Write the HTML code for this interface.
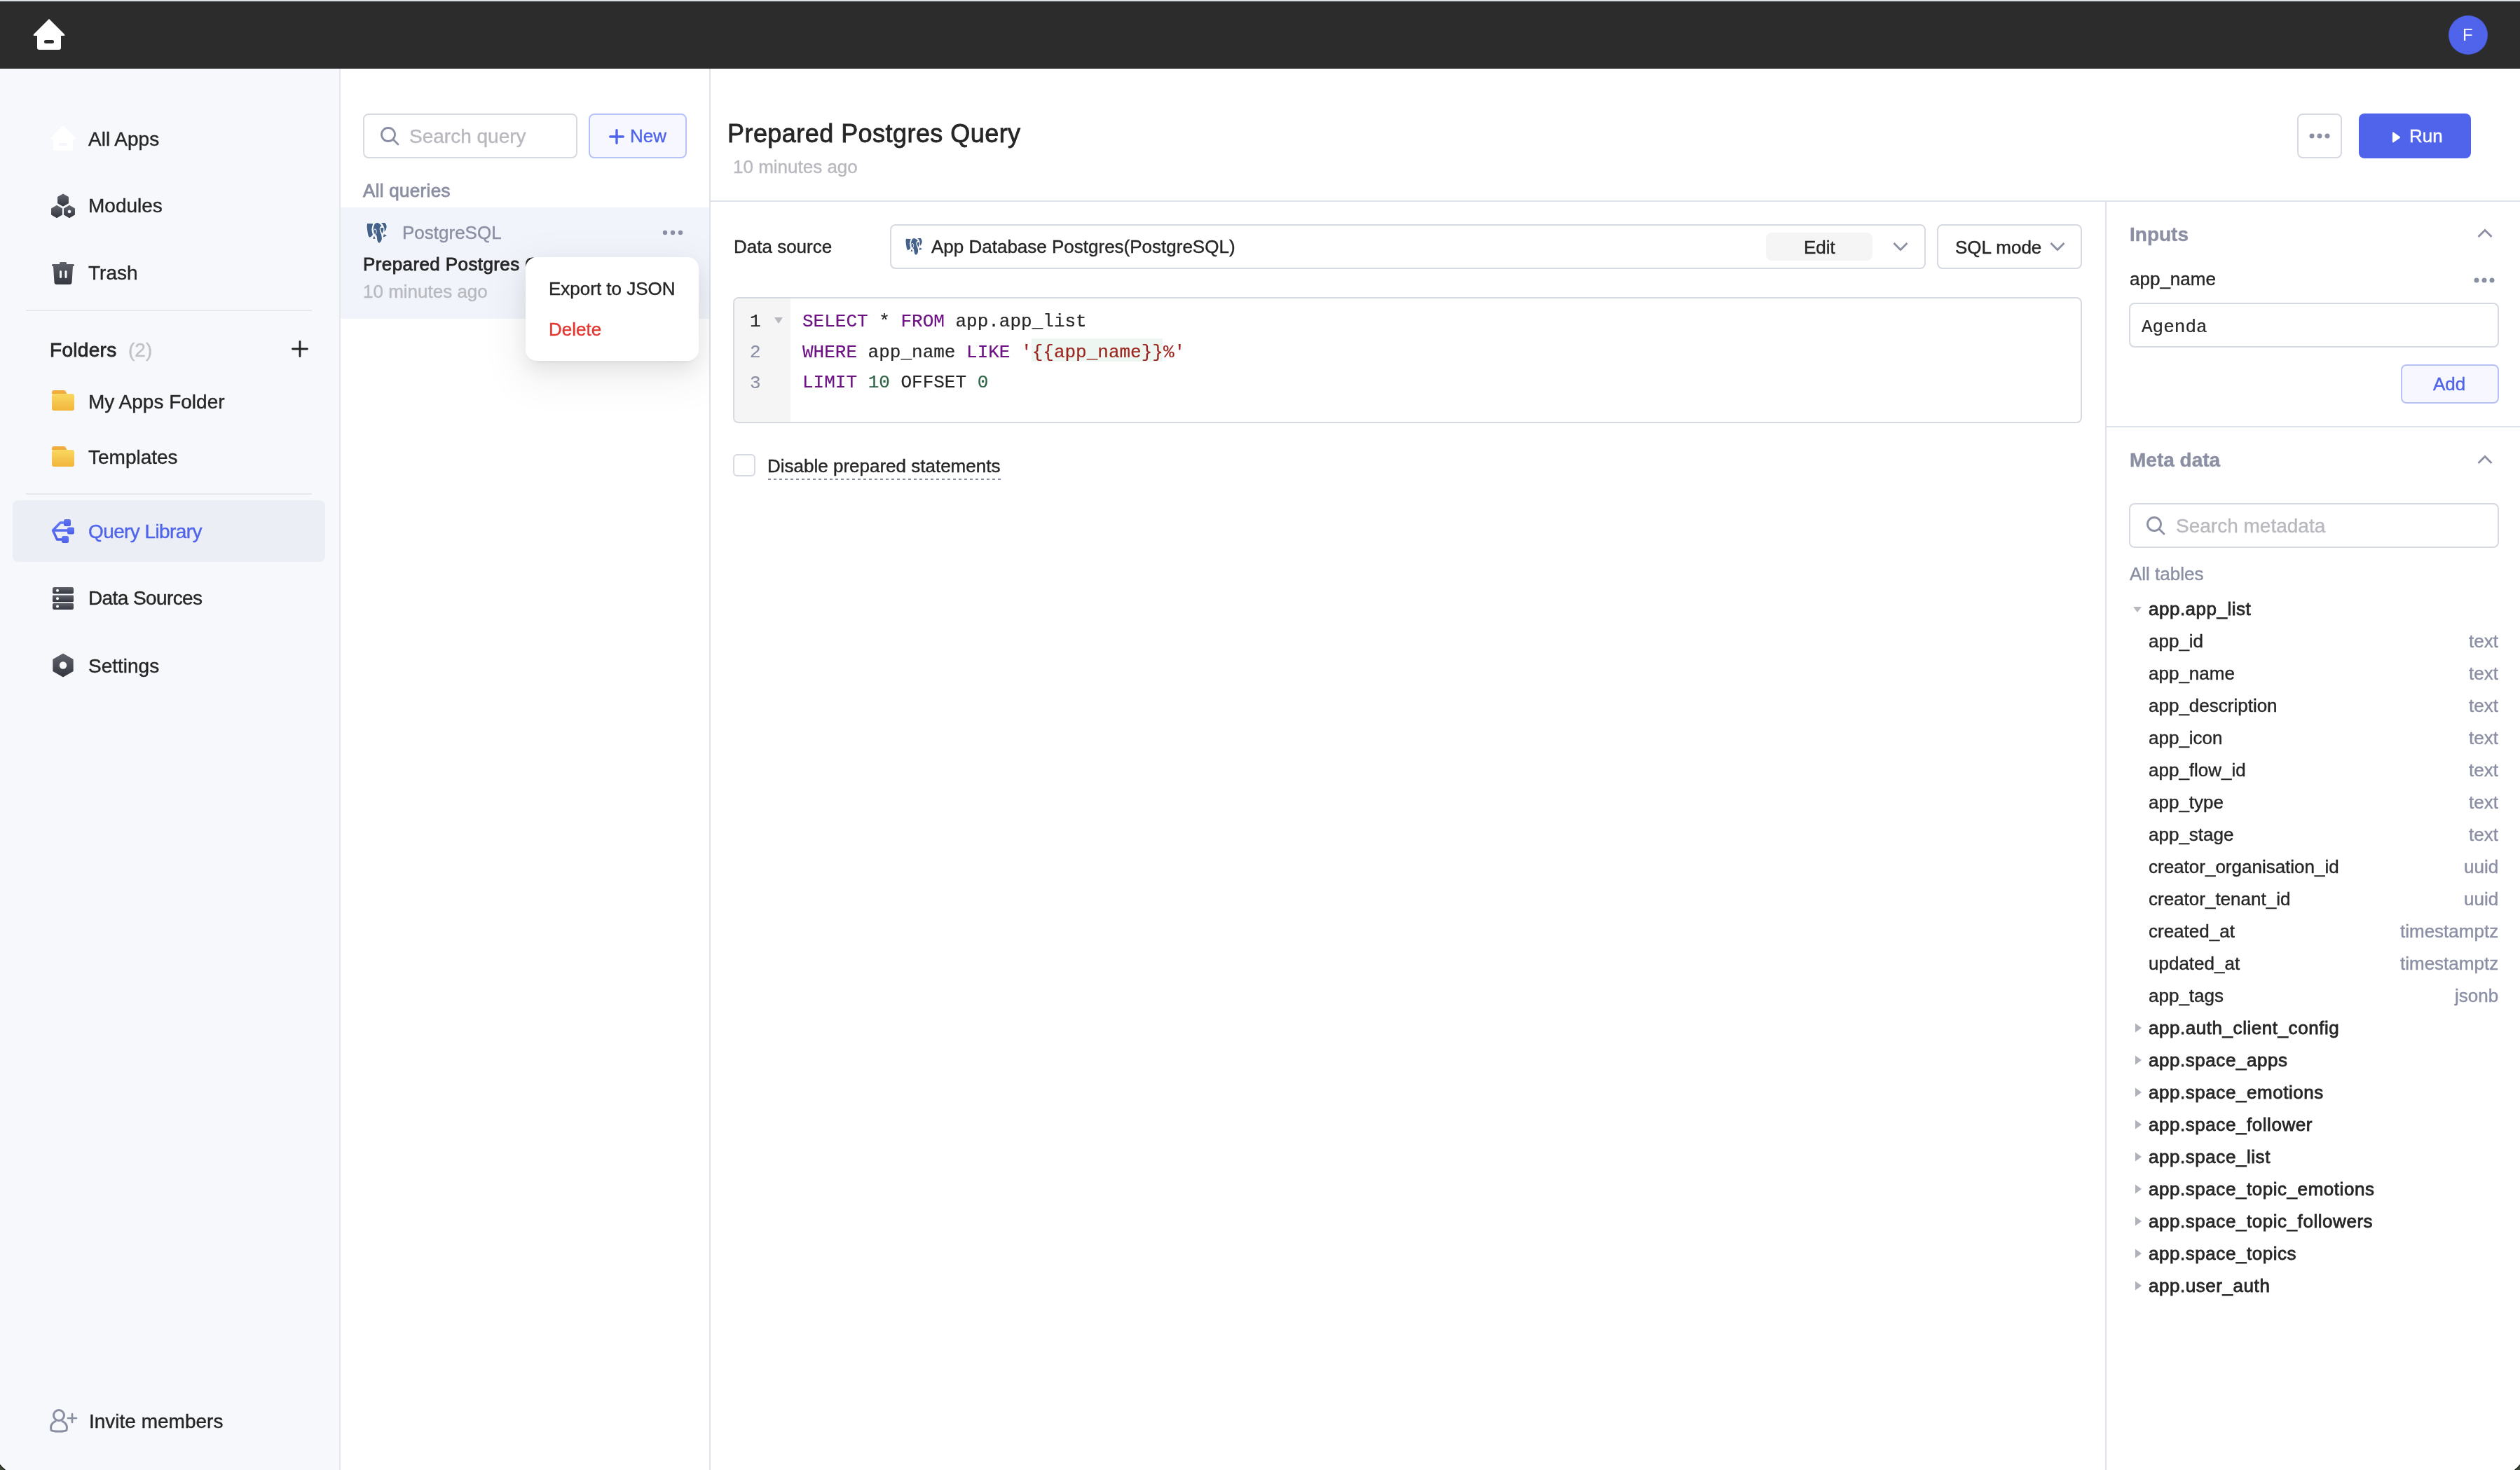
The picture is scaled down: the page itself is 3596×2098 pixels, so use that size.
<!DOCTYPE html>
<html><head><meta charset="utf-8"><style>
html,body{margin:0;padding:0;width:3596px;height:2098px;overflow:hidden;background:#fff}
body>div,body>svg{position:absolute;box-sizing:content-box}
.t{white-space:pre;line-height:1;will-change:transform;-webkit-text-stroke:0.4px currentColor}
.m{-webkit-text-stroke:0.2px currentColor}
.s{font-family:"Liberation Sans",sans-serif}
.m{font-family:"Liberation Mono",monospace}
</style></head><body>
<div style="left:0px;top:0px;width:3596px;height:2px;background:#dcdfe3"></div>
<div style="left:0px;top:2px;width:3596px;height:96px;background:#2c2c2c"></div>
<div style="left:0px;top:2px;width:3596px;height:1px;background:#1f1f1f"></div>
<svg style="left:47px;top:26px" width="46" height="46" viewBox="0 0 46 46"><path d="M23 1 L45 23 Q46 25 44 25 L40 25 L40 42 Q40 45 37 45 L9 45 Q6 45 6 42 L6 25 L2 25 Q0 25 1 23 Z" fill="#fff"/><rect x="16" y="31" width="14" height="5" rx="2.5" fill="#2c2c2c"/></svg>
<div style="left:3494px;top:22px;width:56px;height:56px;border-radius:50%;background:#4f64ea;box-shadow:inset 0 0 0 1px rgba(0,0,0,0.06)"></div>
<div class="t s" style="top:38px;font-size:24px;color:#fff;left:3514px;-webkit-text-stroke:0;">F</div>
<div style="left:0px;top:98px;width:484px;height:2000px;background:#f7f8fc"></div>
<div style="left:484px;top:98px;width:2px;height:2000px;background:#e6e7ea"></div>
<svg style="left:71px;top:178px" width="38" height="38" viewBox="0 0 38 38"><path d="M19 1 L37 19 Q38 21 36 21 L33 21 L33 35 Q33 37 31 37 L7 37 Q5 37 5 35 L5 21 L2 21 Q0 21 1 19 Z" fill="#ffffff"/><rect x="13" y="26" width="12" height="4" rx="2" fill="#f5f6fa"/></svg>
<div class="t s" style="top:185px;font-size:28px;color:#262626;left:126px;">All Apps</div>
<svg style="left:72px;top:276px" width="36" height="36" viewBox="0 0 36 36"><defs><linearGradient id="gd" x1="0" y1="0" x2="0" y2="1"><stop offset="0" stop-color="#60636b"/><stop offset="1" stop-color="#34373f"/></linearGradient></defs><path d="M18.00 1.30 L25.19 5.45 L25.19 13.75 L18.00 17.90 L10.81 13.75 L10.81 5.45 Z" fill="url(#gd)" stroke="url(#gd)" stroke-width="1.5" stroke-linejoin="round"/><path d="M9.00 17.70 L16.19 21.85 L16.19 30.15 L9.00 34.30 L1.81 30.15 L1.81 21.85 Z" fill="url(#gd)" stroke="url(#gd)" stroke-width="1.5" stroke-linejoin="round"/><path d="M27.00 17.70 L34.19 21.85 L34.19 30.15 L27.00 34.30 L19.81 30.15 L19.81 21.85 Z M27.00 22.60 L29.94 24.30 L29.94 27.70 L27.00 29.40 L24.06 27.70 L24.06 24.30 Z" fill="url(#gd)" fill-rule="evenodd" stroke="url(#gd)" stroke-width="1.5" stroke-linejoin="round"/></svg>
<div class="t s" style="top:280px;font-size:28px;color:#262626;left:126px;">Modules</div>
<svg style="left:73px;top:373px" width="34" height="34" viewBox="0 0 34 34"><defs><linearGradient id="gd" x1="0" y1="0" x2="0" y2="1"><stop offset="0" stop-color="#60636b"/><stop offset="1" stop-color="#34373f"/></linearGradient></defs><path d="M12 2 Q12 1 14 1 L20 1 Q22 1 22 2 L22 4 L32 4 Q33 4 33 5.5 Q33 7 32 7 L31 7 L29.5 30 Q29.3 33 26 33 L8 33 Q4.7 33 4.5 30 L3 7 L2 7 Q1 7 1 5.5 Q1 4 2 4 L12 4 Z" fill="url(#gd)"/><rect x="12" y="13" width="3" height="11" rx="1.5" fill="#f7f8fa"/><rect x="19.5" y="13" width="3" height="11" rx="1.5" fill="#f7f8fa"/></svg>
<div class="t s" style="top:376px;font-size:28px;color:#262626;left:126px;">Trash</div>
<div style="left:37px;top:442px;width:408px;height:2px;background:#e8e8ea"></div>
<div class="t s" style="top:486px;font-size:28px;color:#262626;left:71px;-webkit-text-stroke:0.8px currentColor;letter-spacing:0.3px;">Folders</div>
<div class="t s" style="top:486px;font-size:28px;color:#c0c2c8;left:183px;">(2)</div>
<svg style="left:414px;top:484px" width="28" height="28" viewBox="0 0 28 28"><path d="M14 3.5 V24.5 M3.5 14 H24.5" stroke="#222" stroke-width="2.8" stroke-linecap="round"/></svg>
<svg style="left:74px;top:557px" width="32" height="29" viewBox="0 0 32 29"><defs><linearGradient id="gf" x1="0" y1="0" x2="0" y2="1"><stop offset="0" stop-color="#f9d862"/><stop offset="1" stop-color="#f2b53c"/></linearGradient></defs><path d="M0 3 Q0 0 3 0 L17 0 Q19 0 20 2 L21.5 5 L0 5 Z" fill="#f0ad3a"/><rect x="0" y="5" width="32" height="24" rx="3" fill="url(#gf)"/></svg>
<div class="t s" style="top:560px;font-size:28px;color:#262626;left:126px;">My Apps Folder</div>
<svg style="left:74px;top:637px" width="32" height="29" viewBox="0 0 32 29"><defs><linearGradient id="gf2" x1="0" y1="0" x2="0" y2="1"><stop offset="0" stop-color="#f9d862"/><stop offset="1" stop-color="#f2b53c"/></linearGradient></defs><path d="M0 3 Q0 0 3 0 L17 0 Q19 0 20 2 L21.5 5 L0 5 Z" fill="#f0ad3a"/><rect x="0" y="5" width="32" height="24" rx="3" fill="url(#gf2)"/></svg>
<div class="t s" style="top:639px;font-size:28px;color:#262626;left:126px;">Templates</div>
<div style="left:37px;top:704px;width:408px;height:2px;background:#e8e8ea"></div>
<div style="left:18px;top:714px;width:446px;height:88px;background:#ebeef5;border-radius:8px"></div>
<svg style="left:73px;top:740px" width="34" height="36" viewBox="0 0 34 36"><defs><linearGradient id="gq" x1="0" y1="0" x2="0" y2="1"><stop offset="0" stop-color="#6177f3"/><stop offset="1" stop-color="#4a5ee8"/></linearGradient></defs><path d="M20 6 L13 6 L2.5 17 L8.5 30 L18 30 M3 17 L24 17" stroke="url(#gq)" stroke-width="3.4" fill="none" stroke-linejoin="round"/><rect x="18" y="1" width="10" height="10" rx="2.5" fill="url(#gq)"/><rect x="23" y="12.5" width="10" height="10" rx="2.5" fill="url(#gq)"/><rect x="15" y="25" width="10" height="10" rx="2.5" fill="url(#gq)"/></svg>
<div class="t s" style="top:745px;font-size:28px;color:#4f64ea;left:126px;letter-spacing:-0.6px;">Query Library</div>
<svg style="left:75px;top:838px" width="30" height="32" viewBox="0 0 30 32"><defs><linearGradient id="gd" x1="0" y1="0" x2="0" y2="1"><stop offset="0" stop-color="#60636b"/><stop offset="1" stop-color="#34373f"/></linearGradient></defs><rect x="0" y="0" width="30" height="9.5" rx="2.5" fill="url(#gd)"/><rect x="0" y="11.5" width="30" height="9.5" rx="1" fill="url(#gd)"/><rect x="0" y="22.5" width="30" height="9.5" rx="2.5" fill="url(#gd)"/><circle cx="7" cy="4.8" r="2" fill="#fff"/><circle cx="7" cy="16.2" r="2" fill="#fff"/><circle cx="7" cy="27.4" r="2" fill="#fff"/></svg>
<div class="t s" style="top:840px;font-size:28px;color:#262626;left:126px;letter-spacing:-0.6px;">Data Sources</div>
<svg style="left:74px;top:932px" width="32" height="35" viewBox="0 0 32 35"><defs><linearGradient id="gd" x1="0" y1="0" x2="0" y2="1"><stop offset="0" stop-color="#60636b"/><stop offset="1" stop-color="#34373f"/></linearGradient></defs><path d="M16.00 1.50 L29.86 9.50 L29.86 25.50 L16.00 33.50 L2.14 25.50 L2.14 9.50 Z M16.00 17.40 L16.09 17.45 L16.09 17.55 L16.00 17.60 L15.91 17.55 L15.91 17.45 Z" fill="url(#gd)" stroke="url(#gd)" stroke-width="1.6" stroke-linejoin="round"/><circle cx="16" cy="17.5" r="5.2" fill="#f7f8fa"/></svg>
<div class="t s" style="top:937px;font-size:28px;color:#262626;left:126px;">Settings</div>
<svg style="left:70px;top:2010px" width="42" height="36" viewBox="0 0 42 36"><circle cx="14" cy="10" r="7.5" stroke="#8b8fa3" stroke-width="3" fill="none"/><path d="M3 31 Q1 22 9 18.5 M19 18.5 Q27 22 25 31 Q24 33 14 33 Q4 33 3 31" stroke="#8b8fa3" stroke-width="3" fill="none" stroke-linecap="round"/><path d="M33 8 V20 M27 14 H39" stroke="#8b8fa3" stroke-width="2.6" stroke-linecap="round"/></svg>
<div class="t s" style="top:2015px;font-size:28px;color:#262626;left:127px;">Invite members</div>
<div style="left:486px;top:98px;width:526px;height:2000px;background:#fff"></div>
<div style="left:1012px;top:98px;width:2px;height:2000px;background:#e1e3eb"></div>
<div style="left:518px;top:162px;width:302px;height:60px;border:2px solid #d7d9e0;border-radius:8px;background:#fff"></div>
<svg style="left:542px;top:180px" width="28" height="28" viewBox="0 0 28 28"><circle cx="12" cy="12" r="9.5" stroke="#8b8fa3" stroke-width="2.8" fill="none"/><path d="M19 19 L26 26" stroke="#8b8fa3" stroke-width="2.8" stroke-linecap="round"/></svg>
<div class="t s" style="top:181px;font-size:28px;color:#b8b9bf;left:584px;">Search query</div>
<div style="left:840px;top:162px;width:136px;height:60px;border:2px solid #b7c2f8;border-radius:8px;background:#f7f8ff"></div>
<svg style="left:868px;top:183px" width="24" height="24" viewBox="0 0 24 24"><path d="M12 2.7 V21.3 M2.7 12 H21.3" stroke="#4f64ea" stroke-width="3.4" stroke-linecap="round"/></svg>
<div class="t s" style="top:181px;font-size:26px;color:#4f64ea;left:899px;">New</div>
<div class="t s" style="top:259px;font-size:26px;color:#8b8fa3;left:518px;-webkit-text-stroke:0.8px currentColor;letter-spacing:0.3px;">All queries</div>
<div style="left:486px;top:296px;width:526px;height:159px;background:#f1f4fa"></div>
<svg style="left:523px;top:318px" width="29" height="29" viewBox="0 0 29 29"><g fill="#44618a" stroke="#fff" stroke-width="1.6" stroke-linejoin="round" style="paint-order:stroke"><path d="M1.2 0.95 L9.3 1.3 Q8 5 7.4 9.1 Q7.6 14 9 16.9 Q7 20 4.2 20.7 Q2.6 19.5 2.2 17 Q1.2 12 0.6 6 Q0.6 2.5 1.2 0.95 Z"/><path d="M9 22.7 L10.9 18.6 L12.7 22.7 Z"/><path d="M20.9 0.1 L26.4 0.1 Q28.6 2.5 28.7 6 Q28.3 10 25.5 12.9 Q26 8.5 24.3 4.7 Q23.2 2.2 20.9 0.1 Z"/><path d="M23.6 20.7 L29 18.5 L24.8 15.9 Z"/><path d="M11.5 2 Q13 0.3 15 0.1 Q18 0.2 21.6 4.3 L19.2 6.2 Q18.2 8.5 19.3 12.5 Q21.7 16.5 21.9 22 Q21.8 26.5 18.2 28.7 Q15.8 28.2 15.2 24 Q14.9 20 14.2 18 Q11.2 17 9.8 14.5 Q9.2 11 9.6 8.5 Q10.2 4.5 11.5 2 Z"/><path d="M12 9.3 Q13.9 10 13.8 13 Q13.6 15.5 12.4 16.4 Q10.9 15.2 10.6 12.6 Q10.5 9.9 12 9.3 Z"/><path d="M19.6 7.6 Q22 6.6 24.5 7.4 Q24.6 11 22.5 15.4 Q20.3 12 19.6 7.6 Z"/></g></svg>
<div class="t s" style="top:319px;font-size:26px;color:#8b8fa3;left:574px;">PostgreSQL</div>
<svg style="left:943px;top:326px" width="36" height="12" viewBox="0 0 36 12"><circle cx="6" cy="6" r="3.2" fill="#8b8fa3"/><circle cx="17" cy="6" r="3.2" fill="#8b8fa3"/><circle cx="28" cy="6" r="3.2" fill="#8b8fa3"/></svg>
<div class="t s" style="top:364px;font-size:26px;color:#262626;left:518px;-webkit-text-stroke:0.8px currentColor;letter-spacing:0.4px;">Prepared Postgres Query</div>
<div class="t s" style="top:403px;font-size:26px;color:#b8b9bf;left:518px;">10 minutes ago</div>
<div style="left:750px;top:367px;width:247px;height:148px;background:#fff;border-radius:16px;box-shadow:0 12px 32px rgba(0,0,0,0.08),0 6px 12px -8px rgba(0,0,0,0.12),0 18px 56px 16px rgba(0,0,0,0.05)"></div>
<div class="t s" style="top:399px;font-size:26px;color:#262626;left:783px;">Export to JSON</div>
<div class="t s" style="top:457px;font-size:26px;color:#e2372f;left:783px;">Delete</div>
<div style="left:1014px;top:98px;width:2582px;height:2000px;background:#fff"></div>
<div class="t s" style="top:173px;font-size:36px;color:#262626;left:1038px;-webkit-text-stroke:0.8px currentColor;letter-spacing:0.45px;">Prepared Postgres Query</div>
<div class="t s" style="top:225px;font-size:26px;color:#b8b9bf;left:1046px;">10 minutes ago</div>
<div style="left:3278px;top:162px;width:60px;height:60px;border:2px solid #d7d9e0;border-radius:8px;background:#fff"></div>
<svg style="left:3292px;top:188px" width="36" height="12" viewBox="0 0 36 12"><circle cx="7" cy="6" r="3.5" fill="#8b8fa3"/><circle cx="18" cy="6" r="3.5" fill="#8b8fa3"/><circle cx="29" cy="6" r="3.5" fill="#8b8fa3"/></svg>
<div style="left:3366px;top:162px;width:160px;height:64px;background:#4f64ea;border-radius:8px"></div>
<svg style="left:3411px;top:187px" width="16" height="18" viewBox="0 0 16 18"><path d="M3 2.5 Q3 1 4.5 1.8 L13.5 8 Q14.5 9 13.5 10 L4.5 16.2 Q3 17 3 15.5 Z" fill="#fff"/></svg>
<div class="t s" style="top:181px;font-size:26px;color:#fff;left:3438px;">Run</div>
<div style="left:1014px;top:286px;width:2582px;height:2px;background:#e1e3eb"></div>
<div style="left:3004px;top:288px;width:2px;height:1810px;background:#e1e3eb"></div>
<div style="left:3006px;top:288px;width:590px;height:1810px;background:#ffffff"></div>
<div class="t s" style="top:339px;font-size:26px;color:#262626;left:1047px;">Data source</div>
<div style="left:1270px;top:320px;width:1474px;height:60px;border:2px solid #d7d9e0;border-radius:8px;background:#fff"></div>
<svg style="left:1292px;top:340px" width="24" height="24" viewBox="0 0 24 24"><g transform="scale(0.8275862068965517)"><g fill="#44618a" stroke="#fff" stroke-width="1.6" stroke-linejoin="round" style="paint-order:stroke"><path d="M1.2 0.95 L9.3 1.3 Q8 5 7.4 9.1 Q7.6 14 9 16.9 Q7 20 4.2 20.7 Q2.6 19.5 2.2 17 Q1.2 12 0.6 6 Q0.6 2.5 1.2 0.95 Z"/><path d="M9 22.7 L10.9 18.6 L12.7 22.7 Z"/><path d="M20.9 0.1 L26.4 0.1 Q28.6 2.5 28.7 6 Q28.3 10 25.5 12.9 Q26 8.5 24.3 4.7 Q23.2 2.2 20.9 0.1 Z"/><path d="M23.6 20.7 L29 18.5 L24.8 15.9 Z"/><path d="M11.5 2 Q13 0.3 15 0.1 Q18 0.2 21.6 4.3 L19.2 6.2 Q18.2 8.5 19.3 12.5 Q21.7 16.5 21.9 22 Q21.8 26.5 18.2 28.7 Q15.8 28.2 15.2 24 Q14.9 20 14.2 18 Q11.2 17 9.8 14.5 Q9.2 11 9.6 8.5 Q10.2 4.5 11.5 2 Z"/><path d="M12 9.3 Q13.9 10 13.8 13 Q13.6 15.5 12.4 16.4 Q10.9 15.2 10.6 12.6 Q10.5 9.9 12 9.3 Z"/><path d="M19.6 7.6 Q22 6.6 24.5 7.4 Q24.6 11 22.5 15.4 Q20.3 12 19.6 7.6 Z"/></g></g></svg>
<div class="t s" style="top:339px;font-size:26px;color:#262626;left:1329px;">App Database Postgres(PostgreSQL)</div>
<div style="left:2520px;top:332px;width:152px;height:40px;background:#f5f5f6;border-radius:8px"></div>
<div class="t s" style="top:340px;font-size:26px;color:#262626;left:2574px;">Edit</div>
<svg style="left:2701px;top:345px" width="22" height="14" viewBox="0 0 22 14"><path d="M1.5 2 L11 11.5 L20.5 2" stroke="#8b8fa3" stroke-width="2.8" fill="none"/></svg>
<div style="left:2764px;top:320px;width:203px;height:60px;border:2px solid #d7d9e0;border-radius:8px;background:#fff"></div>
<div class="t s" style="top:340px;font-size:26px;color:#262626;left:2790px;">SQL mode</div>
<svg style="left:2925px;top:345px" width="22" height="14" viewBox="0 0 22 14"><path d="M1.5 2 L11 11.5 L20.5 2" stroke="#8b8fa3" stroke-width="2.8" fill="none"/></svg>
<div style="left:1046px;top:424px;width:1921px;height:176px;border:2px solid #d7d9e0;border-radius:8px;background:#fff;overflow:hidden"><div style="position:absolute;left:0;top:0;width:80px;height:176px;background:#f5f5f6"></div></div>
<div style="left:1472px;top:483px;width:187px;height:33px;background:#eef6f2"></div>
<div class="t m" style="top:446px;font-size:26px;color:#262626;left:1070px;">1</div>
<div class="t m" style="top:490px;font-size:26px;color:#8b8fa3;left:1070px;">2</div>
<div class="t m" style="top:534px;font-size:26px;color:#8b8fa3;left:1070px;">3</div>
<svg style="left:1104px;top:452px" width="14" height="11" viewBox="0 0 14 11"><path d="M1 1 L13 1 L7 10 Z" fill="#b8b9bf"/></svg>
<div class="t m" style="top:446px;font-size:26px;color:#262626;left:1145px;"><span style="color:#6d1283">SELECT</span> * <span style="color:#6d1283">FROM</span> app.app_list</div>
<div class="t m" style="top:490px;font-size:26px;color:#262626;left:1145px;"><span style="color:#6d1283">WHERE</span> app_name <span style="color:#6d1283">LIKE</span> <span style="color:#9c251d">'{{app_name}}%'</span></div>
<div class="t m" style="top:533px;font-size:26px;color:#262626;left:1145px;"><span style="color:#6d1283">LIMIT</span> <span style="color:#2f6447">10</span> OFFSET <span style="color:#2f6447">0</span></div>
<div style="left:1046px;top:648px;width:28px;height:28px;border:2px solid #d7d9e0;border-radius:6px;background:#fff"></div>
<div class="t s" style="top:652px;font-size:26px;color:#262626;left:1095px;">Disable prepared statements</div>
<div style="left:1096px;top:683px;width:332px;height:2px;background:repeating-linear-gradient(90deg,#8b8fa3 0 4px,transparent 4px 8px)"></div>
<div class="t s" style="top:321px;font-size:28px;color:#8b8fa3;left:3039px;font-weight:700;">Inputs</div>
<svg style="left:3535px;top:326px" width="22" height="14" viewBox="0 0 22 14"><path d="M1.5 12 L11 2.5 L20.5 12" stroke="#8b8fa3" stroke-width="2.8" fill="none"/></svg>
<div class="t s" style="top:385px;font-size:26px;color:#262626;left:3039px;">app_name</div>
<svg style="left:3528px;top:394px" width="36" height="12" viewBox="0 0 36 12"><circle cx="6" cy="6" r="3.5" fill="#8b8fa3"/><circle cx="17" cy="6" r="3.5" fill="#8b8fa3"/><circle cx="28" cy="6" r="3.5" fill="#8b8fa3"/></svg>
<div style="left:3038px;top:432px;width:524px;height:60px;border:2px solid #d7d9e0;border-radius:8px;background:#fff"></div>
<div class="t m" style="top:454px;font-size:26px;color:#262626;left:3056px;">Agenda</div>
<div style="left:3426px;top:520px;width:136px;height:52px;border:2px solid #b7c2f8;border-radius:8px;background:#f7f8ff"></div>
<div class="t s" style="top:535px;font-size:26px;color:#4f64ea;left:3472px;">Add</div>
<div style="left:3006px;top:608px;width:590px;height:2px;background:#e1e3eb"></div>
<div class="t s" style="top:643px;font-size:28px;color:#8b8fa3;left:3039px;font-weight:700;">Meta data</div>
<svg style="left:3535px;top:649px" width="22" height="14" viewBox="0 0 22 14"><path d="M1.5 12 L11 2.5 L20.5 12" stroke="#8b8fa3" stroke-width="2.8" fill="none"/></svg>
<div style="left:3038px;top:718px;width:524px;height:60px;border:2px solid #d7d9e0;border-radius:8px;background:#fff"></div>
<svg style="left:3062px;top:736px" width="28" height="28" viewBox="0 0 28 28"><circle cx="12" cy="12" r="9.5" stroke="#8b8fa3" stroke-width="2.8" fill="none"/><path d="M19 19 L26 26" stroke="#8b8fa3" stroke-width="2.8" stroke-linecap="round"/></svg>
<div class="t s" style="top:737px;font-size:28px;color:#b8b9bf;left:3105px;">Search metadata</div>
<div class="t s" style="top:806px;font-size:26px;color:#8b8fa3;left:3039px;">All tables</div>
<svg style="left:3043px;top:865px" width="14" height="10" viewBox="0 0 14 10"><path d="M1 1 L13 1 L7 9 Z" fill="#b8b9bf"/></svg>
<div class="t s" style="top:856px;font-size:26px;color:#262626;left:3066px;-webkit-text-stroke:0.8px currentColor;letter-spacing:0.5px;">app.app_list</div>
<div class="t s" style="top:902px;font-size:26px;color:#262626;left:3066px;">app_id</div>
<div class="t s" style="top:902px;font-size:26px;color:#8b8fa3;right:31px;text-align:right;">text</div>
<div class="t s" style="top:948px;font-size:26px;color:#262626;left:3066px;">app_name</div>
<div class="t s" style="top:948px;font-size:26px;color:#8b8fa3;right:31px;text-align:right;">text</div>
<div class="t s" style="top:994px;font-size:26px;color:#262626;left:3066px;">app_description</div>
<div class="t s" style="top:994px;font-size:26px;color:#8b8fa3;right:31px;text-align:right;">text</div>
<div class="t s" style="top:1040px;font-size:26px;color:#262626;left:3066px;">app_icon</div>
<div class="t s" style="top:1040px;font-size:26px;color:#8b8fa3;right:31px;text-align:right;">text</div>
<div class="t s" style="top:1086px;font-size:26px;color:#262626;left:3066px;">app_flow_id</div>
<div class="t s" style="top:1086px;font-size:26px;color:#8b8fa3;right:31px;text-align:right;">text</div>
<div class="t s" style="top:1132px;font-size:26px;color:#262626;left:3066px;">app_type</div>
<div class="t s" style="top:1132px;font-size:26px;color:#8b8fa3;right:31px;text-align:right;">text</div>
<div class="t s" style="top:1178px;font-size:26px;color:#262626;left:3066px;">app_stage</div>
<div class="t s" style="top:1178px;font-size:26px;color:#8b8fa3;right:31px;text-align:right;">text</div>
<div class="t s" style="top:1224px;font-size:26px;color:#262626;left:3066px;">creator_organisation_id</div>
<div class="t s" style="top:1224px;font-size:26px;color:#8b8fa3;right:31px;text-align:right;">uuid</div>
<div class="t s" style="top:1270px;font-size:26px;color:#262626;left:3066px;">creator_tenant_id</div>
<div class="t s" style="top:1270px;font-size:26px;color:#8b8fa3;right:31px;text-align:right;">uuid</div>
<div class="t s" style="top:1316px;font-size:26px;color:#262626;left:3066px;">created_at</div>
<div class="t s" style="top:1316px;font-size:26px;color:#8b8fa3;right:31px;text-align:right;">timestamptz</div>
<div class="t s" style="top:1362px;font-size:26px;color:#262626;left:3066px;">updated_at</div>
<div class="t s" style="top:1362px;font-size:26px;color:#8b8fa3;right:31px;text-align:right;">timestamptz</div>
<div class="t s" style="top:1408px;font-size:26px;color:#262626;left:3066px;">app_tags</div>
<div class="t s" style="top:1408px;font-size:26px;color:#8b8fa3;right:31px;text-align:right;">jsonb</div>
<svg style="left:3046px;top:1460px" width="11" height="14" viewBox="0 0 11 14"><path d="M1 0.5 L10 7 L1 13.5 Z" fill="#b0b2b9"/></svg>
<div class="t s" style="top:1454px;font-size:26px;color:#262626;left:3066px;-webkit-text-stroke:0.8px currentColor;letter-spacing:0.55px;">app.auth_client_config</div>
<svg style="left:3046px;top:1506px" width="11" height="14" viewBox="0 0 11 14"><path d="M1 0.5 L10 7 L1 13.5 Z" fill="#b0b2b9"/></svg>
<div class="t s" style="top:1500px;font-size:26px;color:#262626;left:3066px;-webkit-text-stroke:0.8px currentColor;letter-spacing:0.55px;">app.space_apps</div>
<svg style="left:3046px;top:1552px" width="11" height="14" viewBox="0 0 11 14"><path d="M1 0.5 L10 7 L1 13.5 Z" fill="#b0b2b9"/></svg>
<div class="t s" style="top:1546px;font-size:26px;color:#262626;left:3066px;-webkit-text-stroke:0.8px currentColor;letter-spacing:0.55px;">app.space_emotions</div>
<svg style="left:3046px;top:1598px" width="11" height="14" viewBox="0 0 11 14"><path d="M1 0.5 L10 7 L1 13.5 Z" fill="#b0b2b9"/></svg>
<div class="t s" style="top:1592px;font-size:26px;color:#262626;left:3066px;-webkit-text-stroke:0.8px currentColor;letter-spacing:0.55px;">app.space_follower</div>
<svg style="left:3046px;top:1644px" width="11" height="14" viewBox="0 0 11 14"><path d="M1 0.5 L10 7 L1 13.5 Z" fill="#b0b2b9"/></svg>
<div class="t s" style="top:1638px;font-size:26px;color:#262626;left:3066px;-webkit-text-stroke:0.8px currentColor;letter-spacing:0.55px;">app.space_list</div>
<svg style="left:3046px;top:1690px" width="11" height="14" viewBox="0 0 11 14"><path d="M1 0.5 L10 7 L1 13.5 Z" fill="#b0b2b9"/></svg>
<div class="t s" style="top:1684px;font-size:26px;color:#262626;left:3066px;-webkit-text-stroke:0.8px currentColor;letter-spacing:0.55px;">app.space_topic_emotions</div>
<svg style="left:3046px;top:1736px" width="11" height="14" viewBox="0 0 11 14"><path d="M1 0.5 L10 7 L1 13.5 Z" fill="#b0b2b9"/></svg>
<div class="t s" style="top:1730px;font-size:26px;color:#262626;left:3066px;-webkit-text-stroke:0.8px currentColor;letter-spacing:0.55px;">app.space_topic_followers</div>
<svg style="left:3046px;top:1782px" width="11" height="14" viewBox="0 0 11 14"><path d="M1 0.5 L10 7 L1 13.5 Z" fill="#b0b2b9"/></svg>
<div class="t s" style="top:1776px;font-size:26px;color:#262626;left:3066px;-webkit-text-stroke:0.8px currentColor;letter-spacing:0.55px;">app.space_topics</div>
<svg style="left:3046px;top:1828px" width="11" height="14" viewBox="0 0 11 14"><path d="M1 0.5 L10 7 L1 13.5 Z" fill="#b0b2b9"/></svg>
<div class="t s" style="top:1822px;font-size:26px;color:#262626;left:3066px;-webkit-text-stroke:0.8px currentColor;letter-spacing:0.55px;">app.user_auth</div>
<svg style="left:0px;top:2084px" width="14" height="14" viewBox="0 0 14 14"><path d="M0 6.5 Q3 11 7.5 14 L0 14 Z" fill="#3d4a37"/><path d="M0 6.5 Q3 11 7.5 14" stroke="#111" stroke-width="1.2" fill="none"/></svg>
<svg style="left:3582px;top:2084px" width="14" height="14" viewBox="0 0 14 14"><path d="M14 6.5 Q11 11 6.5 14 L14 14 Z" fill="#3d4a37"/><path d="M14 6.5 Q11 11 6.5 14" stroke="#111" stroke-width="1.2" fill="none"/></svg>
</body></html>
